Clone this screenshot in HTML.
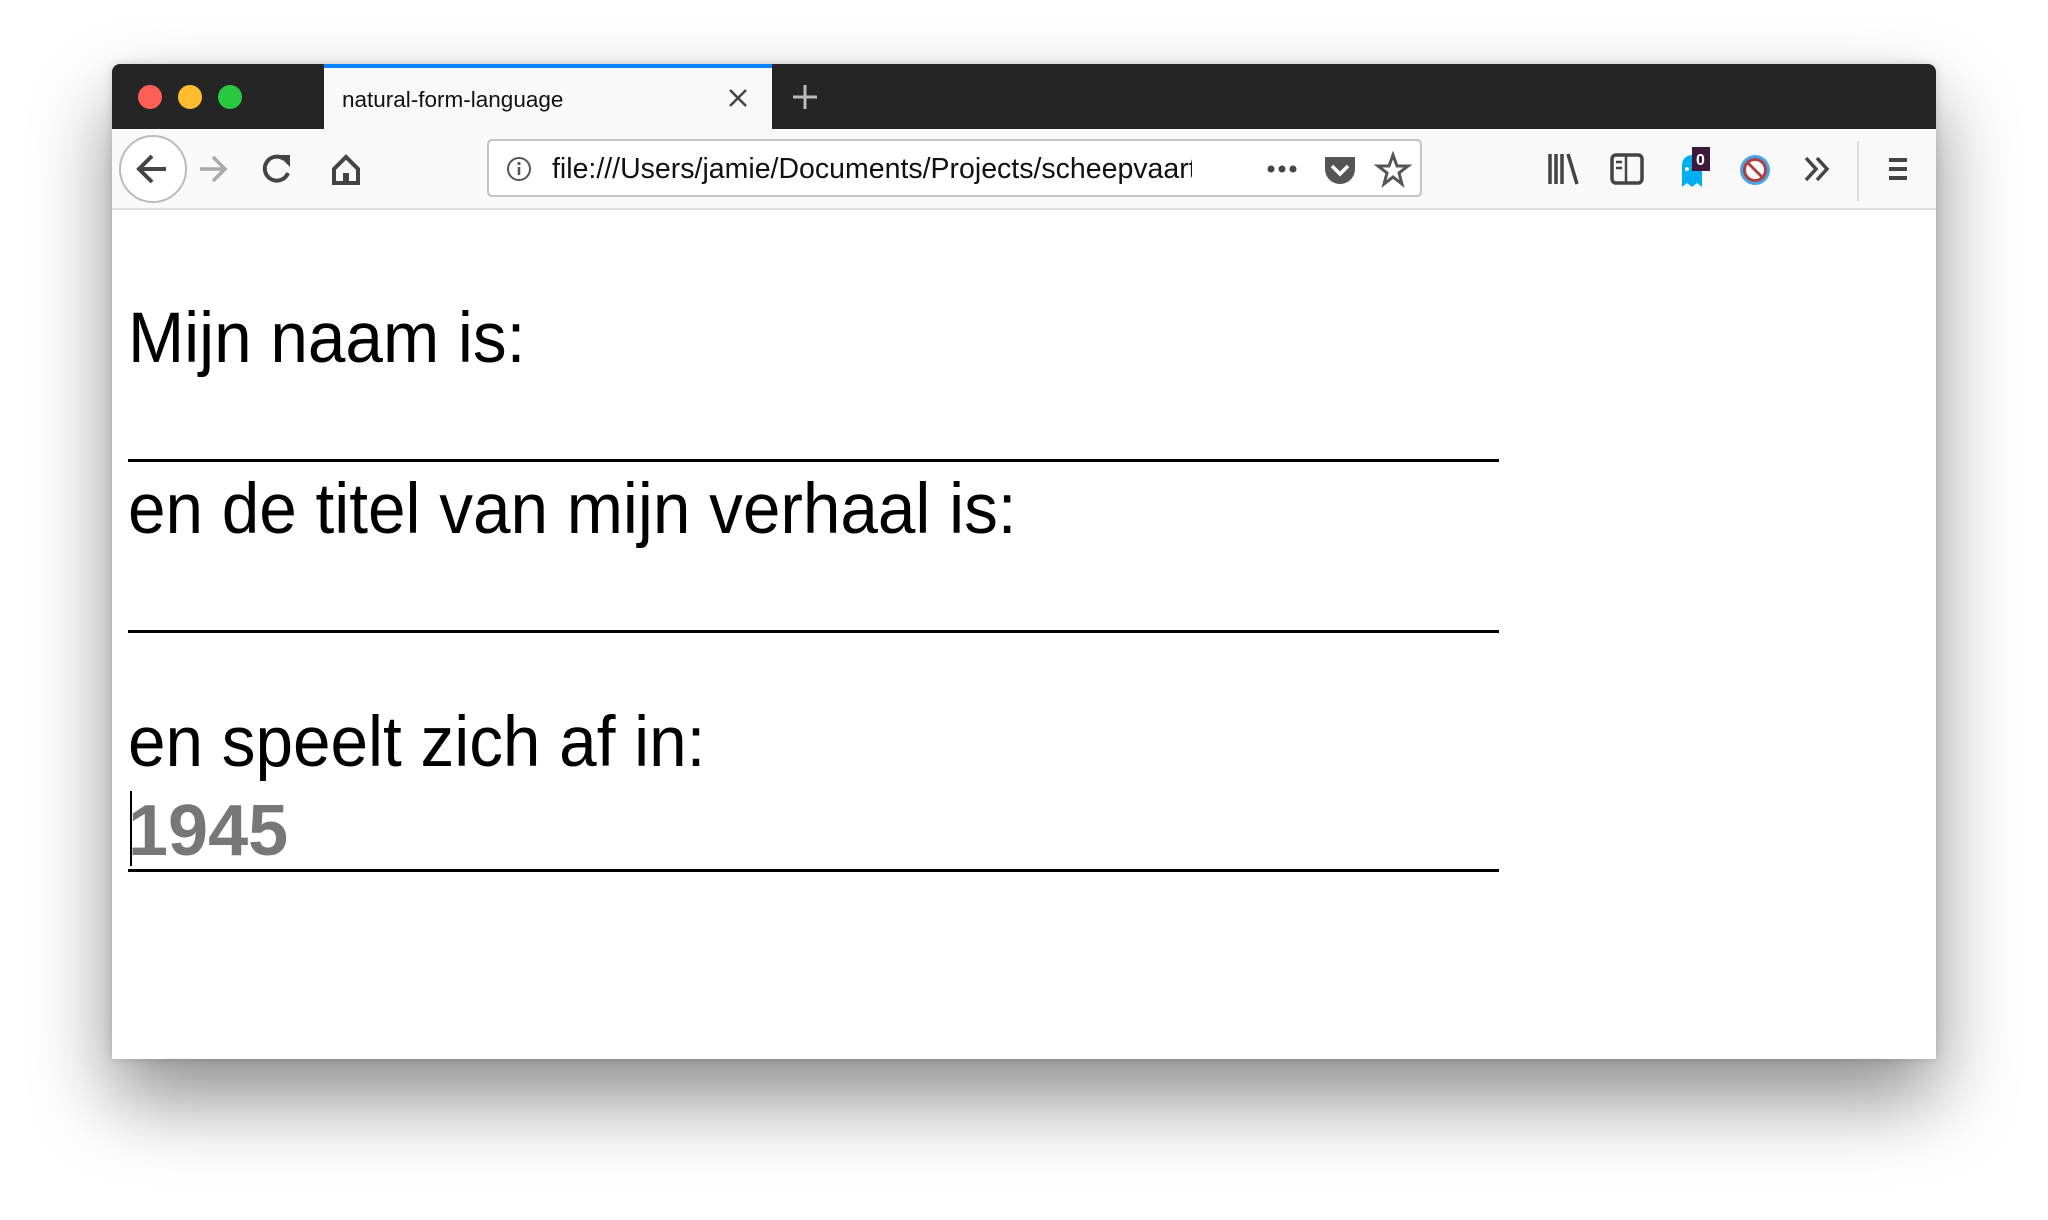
<!DOCTYPE html>
<html><head><meta charset="utf-8"><style>
*{margin:0;padding:0;box-sizing:border-box}
body{width:2048px;height:1220px;background:#fff;position:relative;overflow:hidden;font-family:"Liberation Sans",sans-serif}
.win{position:absolute;left:112px;top:64px;width:1824px;height:995px;background:#fff;border-radius:8px 8px 0 0;box-shadow:0 40px 80px rgba(0,0,0,.45),0 0 10px rgba(0,0,0,.15);overflow:hidden}
.tabbar{position:absolute;left:0;top:0;width:100%;height:65px;background:#252525}
.dot{position:absolute;top:21px;width:24px;height:24px;border-radius:50%}
.tab{position:absolute;left:212px;top:0;width:448px;height:65px;background:#f9f9fa;border-top:4px solid #0a84ff}
.tab span{position:absolute;left:18px;top:19px;font-size:22.5px;color:#111}
.toolbar{position:absolute;left:0;top:65px;width:100%;height:81px;background:#f9f9fa;border-bottom:2px solid #ddd}
.url{position:absolute;left:375px;top:10px;width:935px;height:58px;background:#fff;border:2px solid #c4c4c4;border-radius:5px}
.url span{position:absolute;left:63px;top:12px;font-size:28.5px;color:#111;white-space:nowrap;width:640px;overflow:hidden}
.lbl{position:absolute;left:16px;font-size:71px;color:#000;white-space:nowrap;transform:scaleX(.95);transform-origin:0 0}
.line{position:absolute;left:16px;width:1371px;height:3px;background:#000}
</style></head><body>
<div class="win">
 <div class="tabbar">
  <div class="dot" style="left:26px;background:#fe5f57"></div>
  <div class="dot" style="left:66px;background:#febc2e"></div>
  <div class="dot" style="left:106px;background:#28c840"></div>
  <div class="tab"><span>natural-form-language</span>
   <svg style="position:absolute;left:402px;top:18px" width="24" height="24" viewBox="0 0 24 24"><path d="M4 4L20 20M20 4L4 20" stroke="#444" stroke-width="2.5"/></svg></div>
  <svg style="position:absolute;left:678px;top:18px" width="30" height="30" viewBox="0 0 30 30"><path d="M15 3V27M3 15H27" stroke="#bbb" stroke-width="3"/></svg>
 </div>
 <div class="toolbar">
  <svg style="position:absolute;left:0;top:0" width="480" height="80" viewBox="0 0 480 80">
   <circle cx="41" cy="40" r="33" fill="#fff" stroke="#bbb" stroke-width="2"/>
   <path d="M54 40H28M40 27L27 40L40 53" fill="none" stroke="#444" stroke-width="4"/>
   <path d="M88 40H112M101 28L113 40L101 52" fill="none" stroke="#aaa" stroke-width="3.5"/>
   <path d="M172 30A12 12 0 1 0 176 44" fill="none" stroke="#444" stroke-width="4"/><path d="M166 26H178V38Z" fill="#444"/>
   <path d="M222 40L234 28L246 40V54H222Z" fill="none" stroke="#444" stroke-width="4"/><rect x="231" y="44" width="6" height="10" fill="#444"/>
  </svg>
  <div class="url">
   <svg style="position:absolute;left:17px;top:15px" width="26" height="26" viewBox="0 0 26 26"><circle cx="13" cy="13" r="11" fill="none" stroke="#555" stroke-width="2"/><path d="M13 11V19" stroke="#555" stroke-width="2.5"/><circle cx="13" cy="7.5" r="1.6" fill="#555"/></svg>
   <span>file:///Users/jamie/Documents/Projects/scheepvaart</span>
   <svg style="position:absolute;left:770px;top:8px" width="160" height="40" viewBox="0 0 160 40">
    <circle cx="12" cy="20" r="3.5" fill="#444"/><circle cx="23" cy="20" r="3.5" fill="#444"/><circle cx="34" cy="20" r="3.5" fill="#444"/>
    <path d="M66 8H96V20A15 15 0 0 1 66 20Z" fill="#555"/><path d="M73 17L81 25L89 17" fill="none" stroke="#fff" stroke-width="3.5"/>
    <path d="M134 6L138 17H149L140 24L143 35L134 28L125 35L128 24L119 17H130Z" fill="none" stroke="#555" stroke-width="3"/>
   </svg>
  </div>
  <svg style="position:absolute;left:1430px;top:0" width="394" height="80" viewBox="0 0 394 80">
   <path d="M8 25V55M14 25V55M20 25V55M26 25L35 55" stroke="#444" stroke-width="3.5"/>
   <rect x="70" y="26" width="30" height="28" rx="4" fill="none" stroke="#444" stroke-width="3.5"/><path d="M84 26V54M74 33H80M74 39H80" stroke="#444" stroke-width="2.5"/>
   <path d="M140 58V36A10 10 0 0 1 160 36V58L155 54L150 58L145 54Z" fill="#00aeef"/>
   <circle cx="145" cy="40" r="2" fill="#fff"/>
   <rect x="150" y="18" width="18" height="24" fill="#3d1a3c"/><text x="154" y="36" font-size="16" font-weight="bold" fill="#fff" font-family="Liberation Sans">0</text>
   <circle cx="213" cy="41" r="15" fill="#4aa3e8"/><circle cx="213" cy="41" r="10.5" fill="#fff" stroke="#b04040" stroke-width="3"/><path d="M206 34L220 48" stroke="#b04040" stroke-width="3"/>
   <path d="M264 29L274 40L264 51M275 29L285 40L275 51" fill="none" stroke="#444" stroke-width="3.5"/>
   <path d="M316 12V72" stroke="#ddd" stroke-width="2"/>
   <path d="M347 31H365M347 40H365M347 49H365" stroke="#444" stroke-width="4"/>
  </svg>
 </div>
 <div class="lbl" style="top:234px">Mijn naam is:</div>
 <div class="line" style="top:395px"></div>
 <div class="lbl" style="top:405px">en de titel van mijn verhaal is:</div>
 <div class="line" style="top:566px"></div>
 <div class="lbl" style="top:638px">en speelt zich af in:</div>
 <div style="position:absolute;left:18px;top:727px;width:2px;height:75px;background:#000"></div>
 <div style="position:absolute;left:16px;top:726px;font-size:72px;font-weight:bold;color:#777">1945</div>
 <div class="line" style="top:805px"></div>
</div>
</body></html>
